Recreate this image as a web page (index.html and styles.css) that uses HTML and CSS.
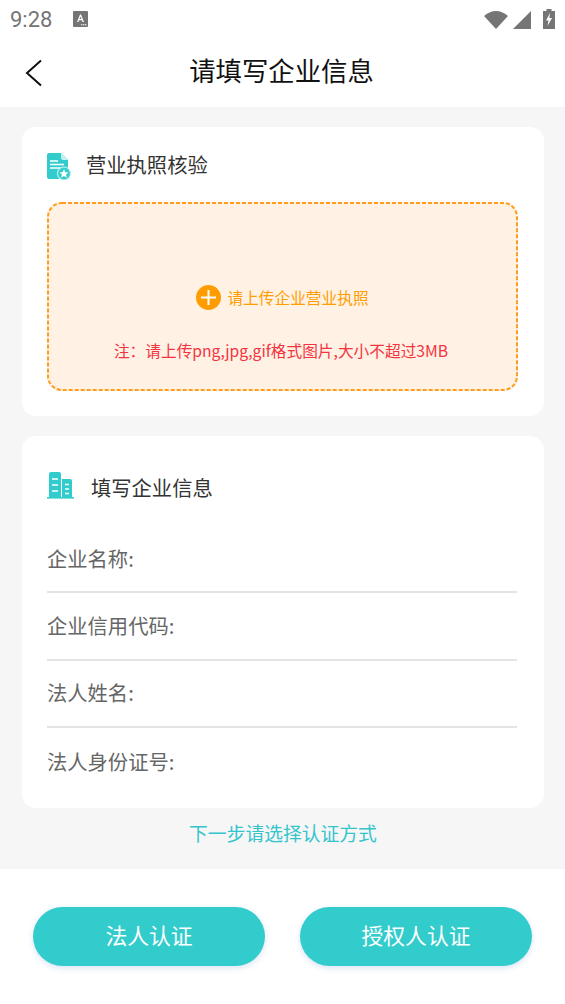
FILE: index.html
```html
<!DOCTYPE html>
<html lang="zh">
<head>
  <meta charset="utf-8">
  <title>请填写企业信息</title>
  <link rel="stylesheet" href="styles.css">
</head>
<body>
  <!-- Status bar -->
  <div class="status-bar">
    <span class="status-time">9:28</span>
    <svg class="status-a" width="15" height="16" viewBox="0 0 15 16">
      <rect width="15" height="16" rx="1" fill="#757575"/>
      <path d="M4 11 L7 3.5 H8 L11 11 H9.5 L8.9 9.3 H6 L5.4 11 Z M6.5 8 H8.4 L7.5 5.4 Z" fill="#fff"/>
      <rect x="8" y="13" width="1.4" height="1.4" fill="#ddd"/><rect x="10" y="13" width="1.4" height="1.4" fill="#ddd"/><rect x="12" y="13" width="1.4" height="1.4" fill="#ddd"/>
    </svg>
    <div class="status-right">
      <svg width="24" height="19" viewBox="0 0 24 19"><path d="M0 6 Q12 -4 24 6 L12 19 Z" fill="#757575"/></svg>
      <svg class="status-signal" width="18" height="19" viewBox="0 0 18 19"><path d="M0 19 L18 1 V19 Z" fill="#757575"/></svg>
      <svg class="status-battery" width="12" height="20" viewBox="0 0 12 20">
        <path d="M3.5 0 H8.5 V2 H12 V20 H0 V2 H3.5 Z" fill="#757575"/>
        <path d="M7 4 L3 11.5 H5.5 L4.5 17 L9 9 H6.3 Z" fill="#fff"/>
      </svg>
    </div>
  </div>

  <!-- Title bar -->
  <header class="title-bar">
    <svg class="back-icon" width="18" height="28" viewBox="0 0 18 28"><path d="M16 1.5 L2 14 L16 26.5" fill="none" stroke="#111" stroke-width="2"/></svg>
    <h1>请填写企业信息</h1>
  </header>

  <main class="content">
    <!-- License upload -->
    <section class="card card-license">
      <div class="card-title">
        <svg width="24" height="27" viewBox="0 0 24 27">
          <path d="M2 0 H14 L21 7 V24 Q21 26 19 26 H2 Q0 26 0 24 V2 Q0 0 2 0 Z" fill="#33cccc"/>
          <path d="M14 0 V5 Q14 7 16 7 H21 Z" fill="#c4f0f0"/>
          <path d="M3 8 H11 M3 11.5 H17 M3 15 H14" stroke="#fff" stroke-width="1.4" fill="none"/>
          <circle cx="17" cy="20.5" r="6.5" fill="#33cccc" stroke="#c4f0f0" stroke-width="1.2"/>
          <path d="M17 16 L18.3 19.2 L21.5 19.5 L19.1 21.6 L19.8 24.8 L17 23.1 L14.2 24.8 L14.9 21.6 L12.5 19.5 L15.7 19.2 Z" fill="#fff"/>
        </svg>
        <span class="title-license">营业执照核验</span>
      </div>
      <div class="upload-box">
        <svg class="upload-border" width="471" height="189" viewBox="0 0 471 189">
          <rect x="1" y="1" width="469" height="187" rx="14" fill="none" stroke="#ff9c1a" stroke-width="2" stroke-dasharray="4 2"/>
        </svg>
        <div class="upload-label">
          <svg width="25" height="25" viewBox="0 0 25 25">
            <circle cx="12.5" cy="12.5" r="12.5" fill="#ff9c00"/>
            <path d="M12.5 5 V20 M5 12.5 H20" stroke="#fff" stroke-width="2"/>
          </svg>
          <span>请上传企业营业执照</span>
        </div>
        <p class="upload-note">注：请上传png,jpg,gif格式图片,大小不超过3MB</p>
      </div>
    </section>

    <!-- Company info -->
    <section class="card card-info">
      <div class="card-title">
        <svg width="27" height="27" viewBox="0 0 27 27">
          <path d="M2 25 V2 Q2 0 4 0 H12 Q14 0 14 2 V25 Z M15 25 V7 H23 Q25 7 25 9 V25 Z" fill="#33cccc"/>
          <rect x="0" y="25" width="27" height="1.6" fill="#33cccc"/>
          <path d="M5 7 H11 M5 13 H11 M5 19 H11 M18 12.5 H22 M18 17 H22 M18 21.5 H22" stroke="#fff" stroke-width="1.7"/>
        </svg>
        <span class="title-info">填写企业信息</span>
      </div>
      <div class="fields">
        <div class="field">企业名称:</div>
        <div class="field">企业信用代码:</div>
        <div class="field">法人姓名:</div>
        <div class="field field-last">法人身份证号:</div>
      </div>
    </section>

    <p class="next-hint">下一步请选择认证方式</p>
  </main>

  <footer class="actions">
    <button class="action-button">法人认证</button>
    <button class="action-button">授权人认证</button>
  </footer>
</body>
</html>
```

FILE: styles.css
```css
html, body {
  height: 100%;
}

body {
  margin: 0;
  display: flex;
  flex-direction: column;
  height: 1004px;
  overflow: hidden;
  background-color: #fff;
  font-family: "Noto Sans CJK SC", "Noto Sans", sans-serif;
  color: #333;
}

.status-bar {
  height: 38px;
  display: flex;
  align-items: center;
  padding: 0 10px;
  color: #757575;
}

.status-time {
  font-family: Roboto, sans-serif;
  font-size: 22px;
  width: 63px;
}

.status-a {
  margin-top: -1px;
}

.status-right {
  margin-left: auto;
  display: flex;
  align-items: center;
}

.status-signal {
  margin-left: 5px;
}

.status-battery {
  margin-left: 12px;
}

.title-bar {
  height: 69px;
  display: flex;
  align-items: center;
  justify-content: center;
  position: relative;
}

.title-bar h1 {
  margin: -6px 2px 0 0;
  font-size: 26.4px;
  font-weight: 400;
  color: #111;
}

.back-icon {
  position: absolute;
  left: 25px;
  top: 21px;
}

.content {
  background-color: #f6f6f6;
  padding: 20px 21px 0 22px;
  height: 762px;
  box-sizing: border-box;
}

.card {
  background-color: #fff;
  border-radius: 14px;
  padding: 0 26px 0 25px;
}

.card-license {
  height: 289px;
  padding-top: 24px;
  box-sizing: border-box;
}

.card-info {
  margin-top: 20px;
  height: 372px;
  padding-top: 34px;
  box-sizing: border-box;
}

.card-title {
  display: flex;
  align-items: center;
  height: 30px;
  font-size: 20.3px;
}

.title-license {
  margin-left: 15px;
  margin-top: -4px;
}

.title-info {
  margin-left: 17px;
  margin-top: 4px;
}

.upload-box {
  margin-top: 21px;
  height: 189px;
  box-sizing: border-box;
  background-color: #fff2e5;
  border-radius: 14px;
  display: flex;
  flex-direction: column;
  align-items: center;
  padding-top: 82px;
  position: relative;
}

.upload-border {
  position: absolute;
  left: 0;
  top: 0;
}

.upload-label {
  display: flex;
  align-items: center;
  gap: 6px;
  font-size: 15.7px;
  color: #ff9c00;
  height: 26px;
}

.upload-note {
  margin: 29px 0 0 -3px;
  font-size: 15.7px;
  line-height: 24px;
  color: #f5333f;
}

.fields {
  margin-top: 26px;
}

.field {
  height: 67.3px;
  box-sizing: border-box;
  border-bottom: 2px solid #e4e4e4;
  font-size: 20.3px;
  color: #666;
  display: flex;
  align-items: center;
  padding-bottom: 2px;
  margin-right: 1px;
}

.field-last {
  border-bottom: none;
}

.next-hint {
  margin: 10px 0 0;
  text-align: center;
  font-size: 18.8px;
  line-height: 30px;
  color: #33c4cc;
}

.actions {
  flex: 1;
  display: flex;
  justify-content: space-between;
  padding: 38px 33px 0;
}

.action-button {
  width: 232px;
  height: 59px;
  border: none;
  border-radius: 30px;
  background-color: #33cccc;
  box-shadow: 0 2px 6px rgba(60, 120, 200, 0.2);
  color: #fff;
  font-family: inherit;
  font-size: 21.8px;
  padding: 0 0 5px;
}
```
